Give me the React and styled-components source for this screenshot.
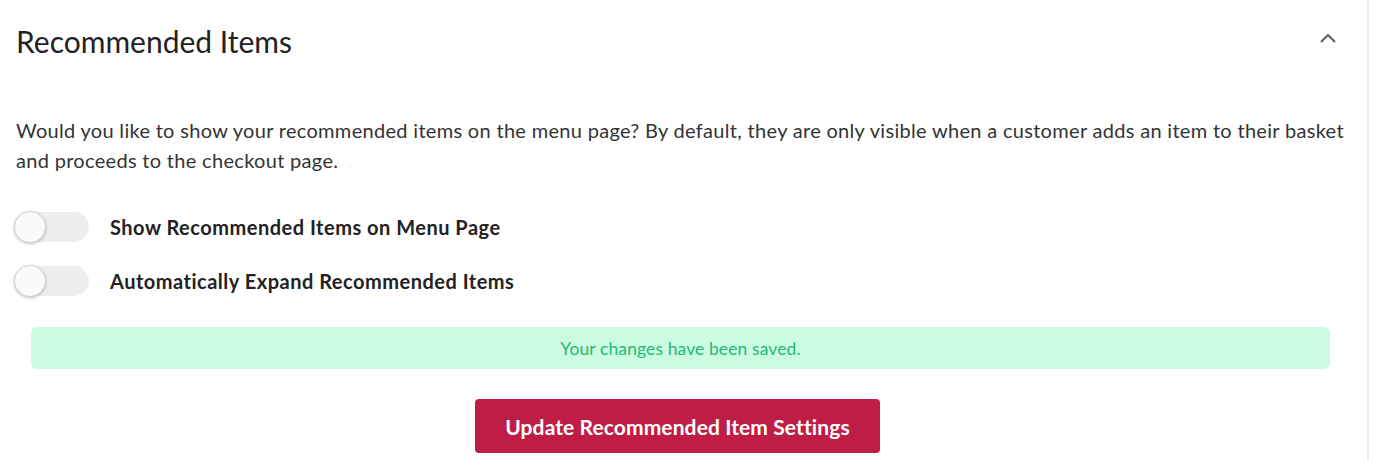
import styled, { createGlobalStyle } from "styled-components";

const GlobalStyle = createGlobalStyle`
  body {
    margin: 0;
    background: #fff;
    font-family: Lato, "Open Sans", sans-serif;
    color: #333;
  }
`;

const Card = styled.section`
  width: 1369px;
  height: 460px;
  box-sizing: border-box;
  border-right: 2px solid #ececec;
  padding: 0 16px 0 16px;
  overflow: hidden;
`;

const Header = styled.div`
  display: flex;
  align-items: center;
  justify-content: space-between;
  height: 82px;
`;

const Title = styled.h2`
  margin: 0;
  font-size: 30px;
  font-weight: 400;
  color: #222;
`;

const Chevron = styled.button`
  border: none;
  background: none;
  padding: 0;
  margin-right: 14px;
  margin-top: -6px;
  display: flex;
  cursor: pointer;
`;

const Intro = styled.p`
  margin: 33px 0 0;
  font-size: 20px;
  letter-spacing: 0.31px;
  line-height: 30px;
  color: #333;
`;

const Toggles = styled.div`
  display: flex;
  flex-direction: column;
  gap: 24px;
  margin-top: 37px;
`;

const ToggleRow = styled.label`
  display: flex;
  align-items: center;
  gap: 21px;
  font-size: 20px;
  letter-spacing: 0.5px;
  font-weight: 700;
  color: #222;
`;

const Track = styled.span`
  position: relative;
  flex: none;
  width: 75px;
  height: 30px;
  border-radius: 15px;
  background: ${(p) => (p.$on ? "#be1e45" : "#eeeeee")};
  margin-left: -2px;
`;

const Knob = styled.span`
  position: absolute;
  top: -1px;
  left: ${(p) => (p.$on ? "44px" : "0")};
  width: 30px;
  height: 30px;
  border-radius: 50%;
  background: #fafafa;
  border: 1px solid #d6d6d6;
  box-shadow: 0 1px 3px rgba(0, 0, 0, 0.25);
`;

const Notice = styled.div`
  margin: 31px 21px 0 15px;
  height: 42px;
  border-radius: 6px;
  background: #ccfce0;
  color: #25b879;
  font-size: 17.5px;
  letter-spacing: 0.1px;
  display: flex;
  align-items: center;
  justify-content: center;
`;

const Actions = styled.div`
  display: flex;
  justify-content: center;
  margin-top: 30px;
`;

const Button = styled.button`
  width: 405px;
  height: 54px;
  border: none;
  border-radius: 4px;
  background: #be1e45;
  color: #fff;
  font-family: Lato, sans-serif;
  font-size: 21px;
  letter-spacing: 0.1px;
  font-weight: 700;
  margin-left: -12px;
`;

function Toggle({ label, on }) {
  return (
    <ToggleRow>
      <Track $on={on}>
        <Knob $on={on} />
      </Track>
      {label}
    </ToggleRow>
  );
}

export default function App() {
  return (
    <>
      <GlobalStyle />
      <Card>
        <Header>
          <Title>Recommended Items</Title>
          <Chevron aria-label="Collapse">
            <svg width="18" height="12" viewBox="0 0 18 12">
              <path d="M2 10 L9 3 L16 10" fill="none" stroke="#666" strokeWidth="2.2" />
            </svg>
          </Chevron>
        </Header>
        <Intro>
          Would you like to show your recommended items on the menu page? By default, they are only visible
          when a customer adds an item to their basket and proceeds to the checkout page.
        </Intro>
        <Toggles>
          <Toggle label="Show Recommended Items on Menu Page" />
          <Toggle label="Automatically Expand Recommended Items" />
        </Toggles>
        <Notice>Your changes have been saved.</Notice>
        <Actions>
          <Button>Update Recommended Item Settings</Button>
        </Actions>
      </Card>
    </>
  );
}
